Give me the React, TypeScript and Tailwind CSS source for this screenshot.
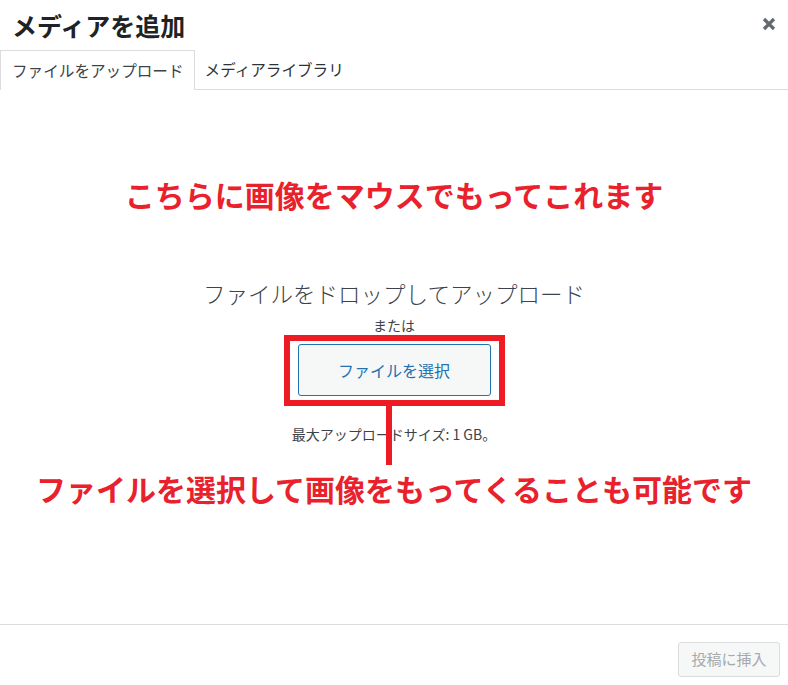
const jp = { fontFamily: '"Noto Sans CJK JP", "Noto Sans", sans-serif' };

const CloseIcon = () => (
  <svg width="14" height="14" viewBox="0 0 14 14" className="text-[#646970]">
    <path d="M2 2 L12 12 M12 2 L2 12" stroke="currentColor" strokeWidth="3.2" />
  </svg>
);

export default function App() {
  return (
    <div style={jp} className="flex h-[685px] w-[788px] flex-col bg-white text-[#1d2327]">
      {/* header */}
      <div className="flex h-[50px] items-center justify-between pl-[12px] pr-[12px]">
        <h1 className="text-[25px] font-bold leading-none">メディアを追加</h1>
        <button className="-mt-[3px]">
          <CloseIcon />
        </button>
      </div>

      {/* tabs */}
      <div className="flex h-[40px] border-b border-[#dcdcde]">
        <div className="-mb-px flex h-[40px] items-center border-x border-t border-[#dcdcde] bg-white pl-[11px] pr-[10px] text-[15.6px] text-[#3c434a]">
          ファイルをアップロード
        </div>
        <div className="flex items-center pl-[10px] text-[15.6px] text-[#2c3338]">
          メディアライブラリ
        </div>
      </div>

      {/* uploader */}
      <div className="flex flex-1 flex-col items-center">
        <p className="mt-[86px] text-[30px] font-bold leading-[36px] text-[#e9212c]">
          こちらに画像をマウスでもってこれます
        </p>
        <p className="mt-[66px] text-[22.5px] font-light leading-[30px] text-[#3c434a]">
          ファイルをドロップしてアップロード
        </p>
        <p className="mt-[7px] text-[14px] leading-[20px] text-[#3c434a]">または</p>
        <div className="relative">
          <div className="border-[6px] border-[#ed1c24] px-[8px] pb-[4px] pt-[3px]">
            <button className="h-[52px] w-[193px] rounded-[3px] border border-[#2271b1] bg-[#f6f7f7] text-[16px] text-[#2271b1]">
              ファイルを選択
            </button>
          </div>
          <div className="absolute left-[102px] top-full z-10 h-[59px] w-[6px] bg-[#ed1c24]" />
        </div>
        <p className="mt-[18px] text-[14px] leading-[20px] text-[#3c434a]">
          最大アップロードサイズ: 1 GB。
        </p>
        <p className="mt-[26px] text-[30px] font-bold leading-[36px] text-[#e9212c]">
          ファイルを選択して画像をもってくることも可能です
        </p>
      </div>

      {/* footer */}
      <div className="flex h-[61px] justify-end border-t border-[#dcdcde] pr-[8px] pt-[17px]">
        <button className="h-[35px] w-[102px] rounded-[3px] border border-[#dcdcde] bg-[#f6f7f7] text-[15px] text-[#a7aaad]">
          投稿に挿入
        </button>
      </div>
    </div>
  );
}
